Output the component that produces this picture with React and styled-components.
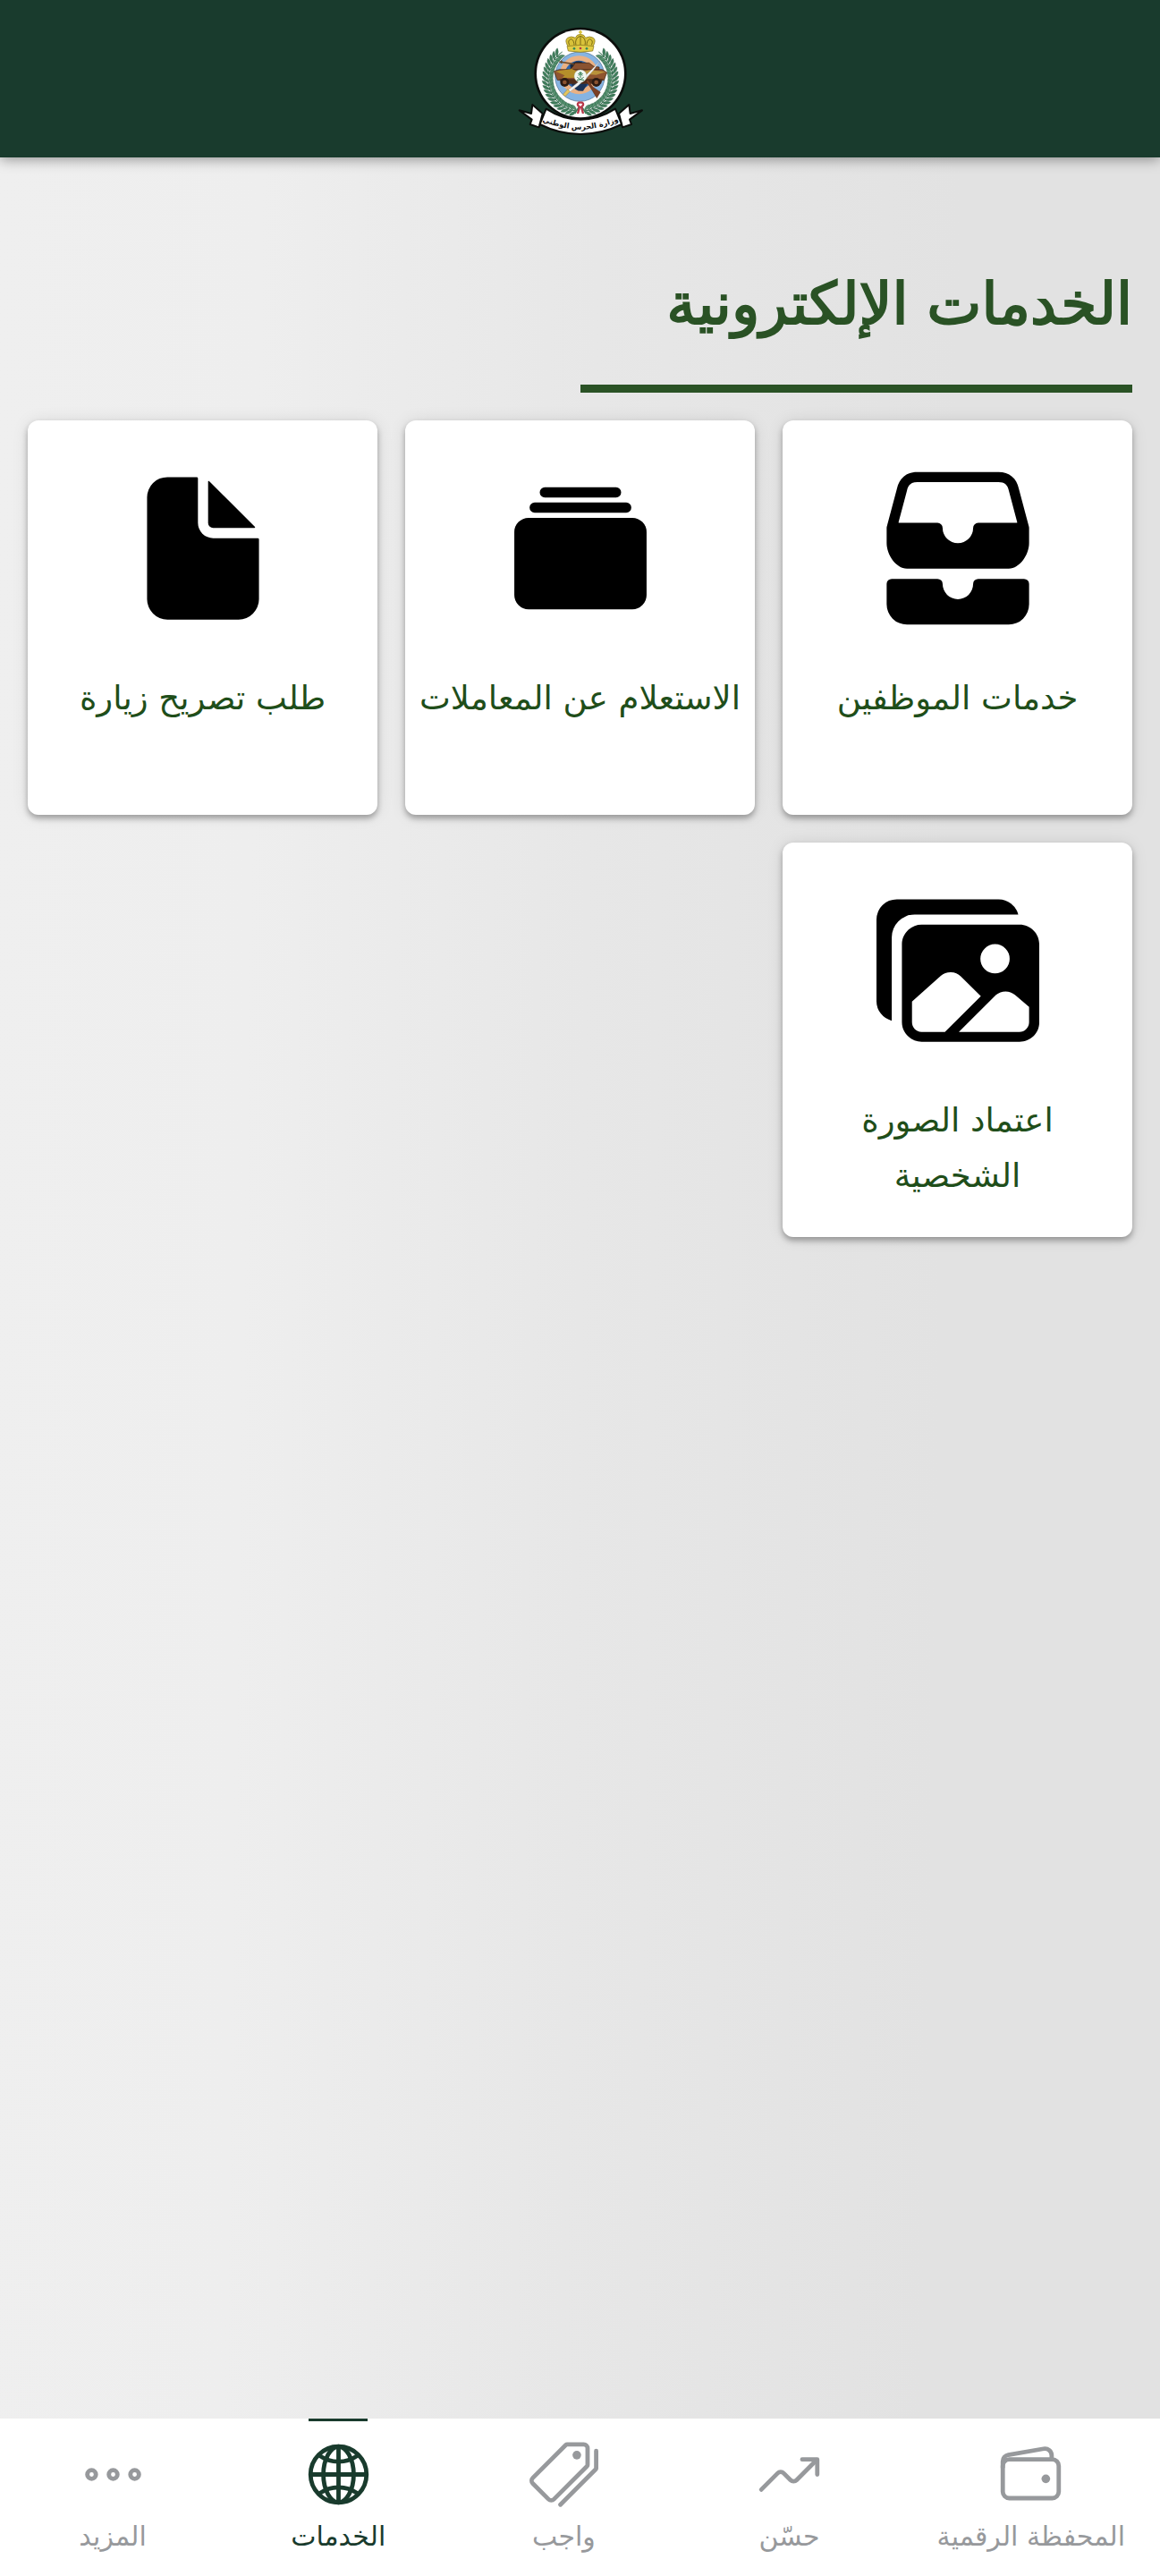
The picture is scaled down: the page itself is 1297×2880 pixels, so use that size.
import styled, { createGlobalStyle } from 'styled-components';
import {
  IoAlbums,
  IoDocument,
  IoEllipsisHorizontalOutline,
  IoFileTrayStacked,
  IoGlobeOutline,
  IoImages,
  IoPricetagsOutline,
  IoTrendingUpOutline,
  IoWalletOutline,
} from 'react-icons/io5';

// styles
const GlobalStyle = createGlobalStyle`
  *, *::before, *::after {
    box-sizing: border-box;
  }

  body {
    margin: 0;
    font-family: 'DejaVu Sans', sans-serif;
  }
`;

const StyledPage = styled.div`
  display: flex;
  flex-direction: column;
  min-height: 100vh;
  background: linear-gradient(91deg, #efefef 0%, #eeeeee 22%, #e7e7e7 50%, #e2e2e2 80%, #e2e2e2 100%);
`;

const StyledHeader = styled.header`
  display: flex;
  justify-content: center;
  align-items: center;
  height: 176px;
  padding-top: 4px;
  background: #193b2d;
  box-shadow: 0 2px 14px rgba(0, 0, 0, 0.4);
`;

const StyledMain = styled.main`
  flex: 1;
  padding: 120px 31px 32px;
`;

const StyledTitle = styled.h1`
  margin: 0;
  height: 134px;
  font-size: 65px;
  line-height: 88px;
  font-weight: 400;
  color: #2a5225;
  -webkit-text-stroke: 2px #2a5225;
`;

const StyledRule = styled.div`
  width: 50%;
  height: 9px;
  margin-bottom: 31px;
  background: #2a5225;
`;

const StyledGrid = styled.div`
  display: grid;
  grid-template-columns: repeat(3, 1fr);
  gap: 31px;
`;

const StyledCard = styled.a`
  display: flex;
  flex-direction: column;
  align-items: center;
  min-height: 441px;
  padding: 52px 14px 32px;
  border-radius: 12px;
  background: #ffffff;
  box-shadow: 0 4px 6px rgba(0, 0, 0, 0.3), 0 1px 18px rgba(0, 0, 0, 0.1);
  color: #000000;
  text-decoration: none;
`;

const StyledCardLabel = styled.span`
  margin-top: 46px;
  font-size: 37px;
  line-height: 62px;
  text-align: center;
  color: #1f4e1a;
`;

const StyledNav = styled.nav`
  display: flex;
  height: 176px;
  background: #ffffff;
`;

const StyledNavItem = styled.a`
  flex: 1 1 0;
  display: flex;
  flex-direction: column;
  align-items: center;
  padding: 0 39px;
  color: ${({ $active }) => ($active ? '#193b2d' : '#97999c')};
  text-decoration: none;
`;

const StyledIndicator = styled.span`
  width: 66px;
  height: 3px;
  margin-bottom: 21px;
  background: ${({ $active }) => ($active ? '#193b2d' : 'transparent')};
`;

const StyledNavLabel = styled.span`
  font-size: 30px;
  line-height: 62px;
  white-space: nowrap;
`;

const services = [
  { id: 'staff', label: 'خدمات الموظفين', icon: IoFileTrayStacked },
  { id: 'inquiry', label: 'الاستعلام عن المعاملات', icon: IoAlbums },
  { id: 'visit', label: 'طلب تصريح زيارة', icon: IoDocument },
  { id: 'photo', label: 'اعتماد الصورة الشخصية', icon: IoImages },
];

const tabs = [
  { id: 'wallet', label: 'المحفظة الرقمية', icon: IoWalletOutline },
  { id: 'improve', label: 'حسّن', icon: IoTrendingUpOutline },
  { id: 'wajib', label: 'واجب', icon: IoPricetagsOutline },
  { id: 'services', label: 'الخدمات', icon: IoGlobeOutline, active: true },
  { id: 'more', label: 'المزيد', icon: IoEllipsisHorizontalOutline },
];

// one side of the wreath, from the foot up to the crown
const leaves = Array.from({ length: 19 }, (_, i) => {
  const angle = 98 + i * 7;
  const rad = (angle * Math.PI) / 180;
  return {
    x: 267 + Math.cos(rad) * 108,
    y: 235 + Math.sin(rad) * 108,
    angle: angle + 90,
  };
});

const Branch = () => (
  <>
    <path d="M252 343A109 109 0 0 1 206 145" fill="none" stroke="#2f6b4c" strokeWidth="3" />
    {leaves.map(({ x, y, angle }) => (
      <g key={angle} transform={`translate(${x} ${y}) rotate(${angle})`}>
        <path d="M-2 0Q4 -20 20 -19Q16 -5 -2 0Z" fill="#3f7d5b" stroke="#1f5238" strokeWidth="1" />
        <path d="M-2 0Q4 20 20 17Q16 4 -2 0Z" fill="#56916f" stroke="#1f5238" strokeWidth="1" />
      </g>
    ))}
  </>
);

const Emblem = () => (
  <svg width="147" height="125" viewBox="45 55 441 375" role="img" aria-label="وزارة الحرس الوطني">
    <circle cx="267" cy="218" r="155" fill="#0b0d0b" />
    <circle cx="267" cy="218" r="147" fill="#ffffff" />

    <Branch />
    <g transform="translate(534 0) scale(-1 1)">
      <Branch />
    </g>

    <circle cx="265" cy="228" r="86" fill="#ffffff" />
    <circle cx="265" cy="228" r="83" fill="#86b4e2" stroke="#4d6f93" strokeWidth="2" />
    <circle cx="262" cy="222" r="56" fill="#2d63a8" stroke="#eab183" strokeWidth="17" />
    <path d="M232 190Q250 172 270 178L292 196L268 212L236 208Z" fill="#16283f" />
    <path d="M236 252Q262 244 290 254L276 276Q250 280 236 252Z" fill="#1a3358" />

    {/* armoured vehicle */}
    <path d="M196 178L258 188M204 174L202 184" stroke="#6b4a2a" strokeWidth="5" />
    <path d="M240 196L250 182H296L312 194L330 196V208H226Z" fill="#8a5230" stroke="#3d2213" strokeWidth="2" />
    <path d="M178 210L196 204H340L356 214L346 240H190Z" fill="#8f552f" stroke="#3d2213" strokeWidth="2" />
    <path d="M184 210L238 202L262 214L250 232H206L214 224Z" fill="#b58f2a" />
    <path d="M272 212L300 206L352 212L320 222L290 220Z" fill="#b9923a" />
    <path d="M196 236H342L336 252H204Z" fill="#4f2c19" />
    <circle cx="214" cy="247" r="15" fill="#2b1a12" />
    <circle cx="214" cy="247" r="7" fill="#8a5230" />
    <circle cx="320" cy="247" r="15" fill="#2b1a12" />
    <circle cx="320" cy="247" r="7" fill="#8a5230" />

    {/* sword and rifle */}
    <path d="M222 276Q286 228 333 174Q296 236 227 282Z" fill="#f3f3f1" stroke="#8b8f94" strokeWidth="1" />
    <path d="M208 288L224 270L232 278L216 294Z" fill="#e4c45e" stroke="#6d5a20" strokeWidth="1" />
    <path d="M292 238L308 262L334 280L322 300L300 264L286 244Z" fill="#7b3f25" stroke="#3a1d10" strokeWidth="1" />

    <circle cx="267" cy="226" r="21" fill="#f2f7f2" stroke="#9fb9a8" strokeWidth="1" />
    <path
      d="M267 212V232M267 214L259 219M267 214L275 219M267 219L260 224M267 219L274 224M256 230Q266 240 279 240M278 230Q268 240 255 240"
      fill="none"
      stroke="#2f7a50"
      strokeWidth="3"
    />

    {/* ribbon tied at the foot of the wreath */}
    <path d="M262 330L248 352M272 330L286 352" stroke="#3f7d5b" strokeWidth="5" />
    <path d="M258 352L264 330Q252 320 262 315H272Q282 320 270 330L276 352" fill="none" stroke="#b8394a" strokeWidth="7" />

    {/* crown */}
    <path
      d="M226 128Q212 106 224 98Q236 90 250 98Q254 86 267 86Q280 86 284 98Q298 90 310 98Q322 106 308 128Z"
      fill="#d9c23a"
      stroke="#7d6c14"
      strokeWidth="2"
    />
    <path
      d="M230 122Q222 106 236 102Q246 106 246 124M252 124Q246 98 267 92Q288 98 282 124M304 122Q312 106 298 102Q288 106 288 124M267 92V126"
      fill="none"
      stroke="#7d6c14"
      strokeWidth="3"
    />
    <path d="M222 126Q267 118 312 126L308 142Q267 150 226 142Z" fill="#e2cc45" stroke="#7d6c14" strokeWidth="2" />
    <circle cx="246" cy="134" r="4" fill="#2f8a5b" />
    <circle cx="267" cy="133" r="4" fill="#b8394a" />
    <circle cx="288" cy="134" r="4" fill="#2f8a5b" />
    <path d="M267 73V86M261 79H273" stroke="#d9c23a" strokeWidth="5" />

    {/* banner */}
    <g stroke="#0b0d0b" strokeWidth="6" strokeLinejoin="round">
      <path d="M62 341L102 352L106 322L140 352L128 398L98 388L104 372Z" fill="#ffffff" />
      <path d="M474 341L434 352L430 322L396 352L408 398L438 388L432 372Z" fill="#ffffff" />
      <path d="M152 336Q206 372 267 372Q328 372 384 336L405 388Q338 421 267 421Q196 421 131 388Z" fill="#ffffff" />
    </g>
    <path id="banner-line" d="M120 370Q200 405 267 405Q334 405 414 370" fill="none" />
    <text fontFamily="DejaVu Sans, sans-serif" fontSize="25" fontWeight="700" fill="#111111" textAnchor="middle" direction="rtl">
      <textPath href="#banner-line" startOffset="50%">
        وزارة الحرس الوطني
      </textPath>
    </text>
  </svg>
);

const App = () => {
  return (
    <>
      <GlobalStyle />
      <StyledPage dir="rtl" lang="ar">
        <StyledHeader>
          <Emblem />
        </StyledHeader>
        <StyledMain>
          <StyledTitle>الخدمات الإلكترونية</StyledTitle>
          <StyledRule />
          <StyledGrid>
            {services.map(({ id, label, icon: Icon }) => (
              <StyledCard key={id} href={`#${id}`}>
                <Icon size={182} />
                <StyledCardLabel>{label}</StyledCardLabel>
              </StyledCard>
            ))}
          </StyledGrid>
        </StyledMain>
        <StyledNav>
          {tabs.map(({ id, label, icon: Icon, active }) => (
            <StyledNavItem key={id} href={`#${id}`} $active={active}>
              <StyledIndicator $active={active} />
              <Icon size={77} />
              <StyledNavLabel>{label}</StyledNavLabel>
            </StyledNavItem>
          ))}
        </StyledNav>
      </StyledPage>
    </>
  );
};

export default App;
